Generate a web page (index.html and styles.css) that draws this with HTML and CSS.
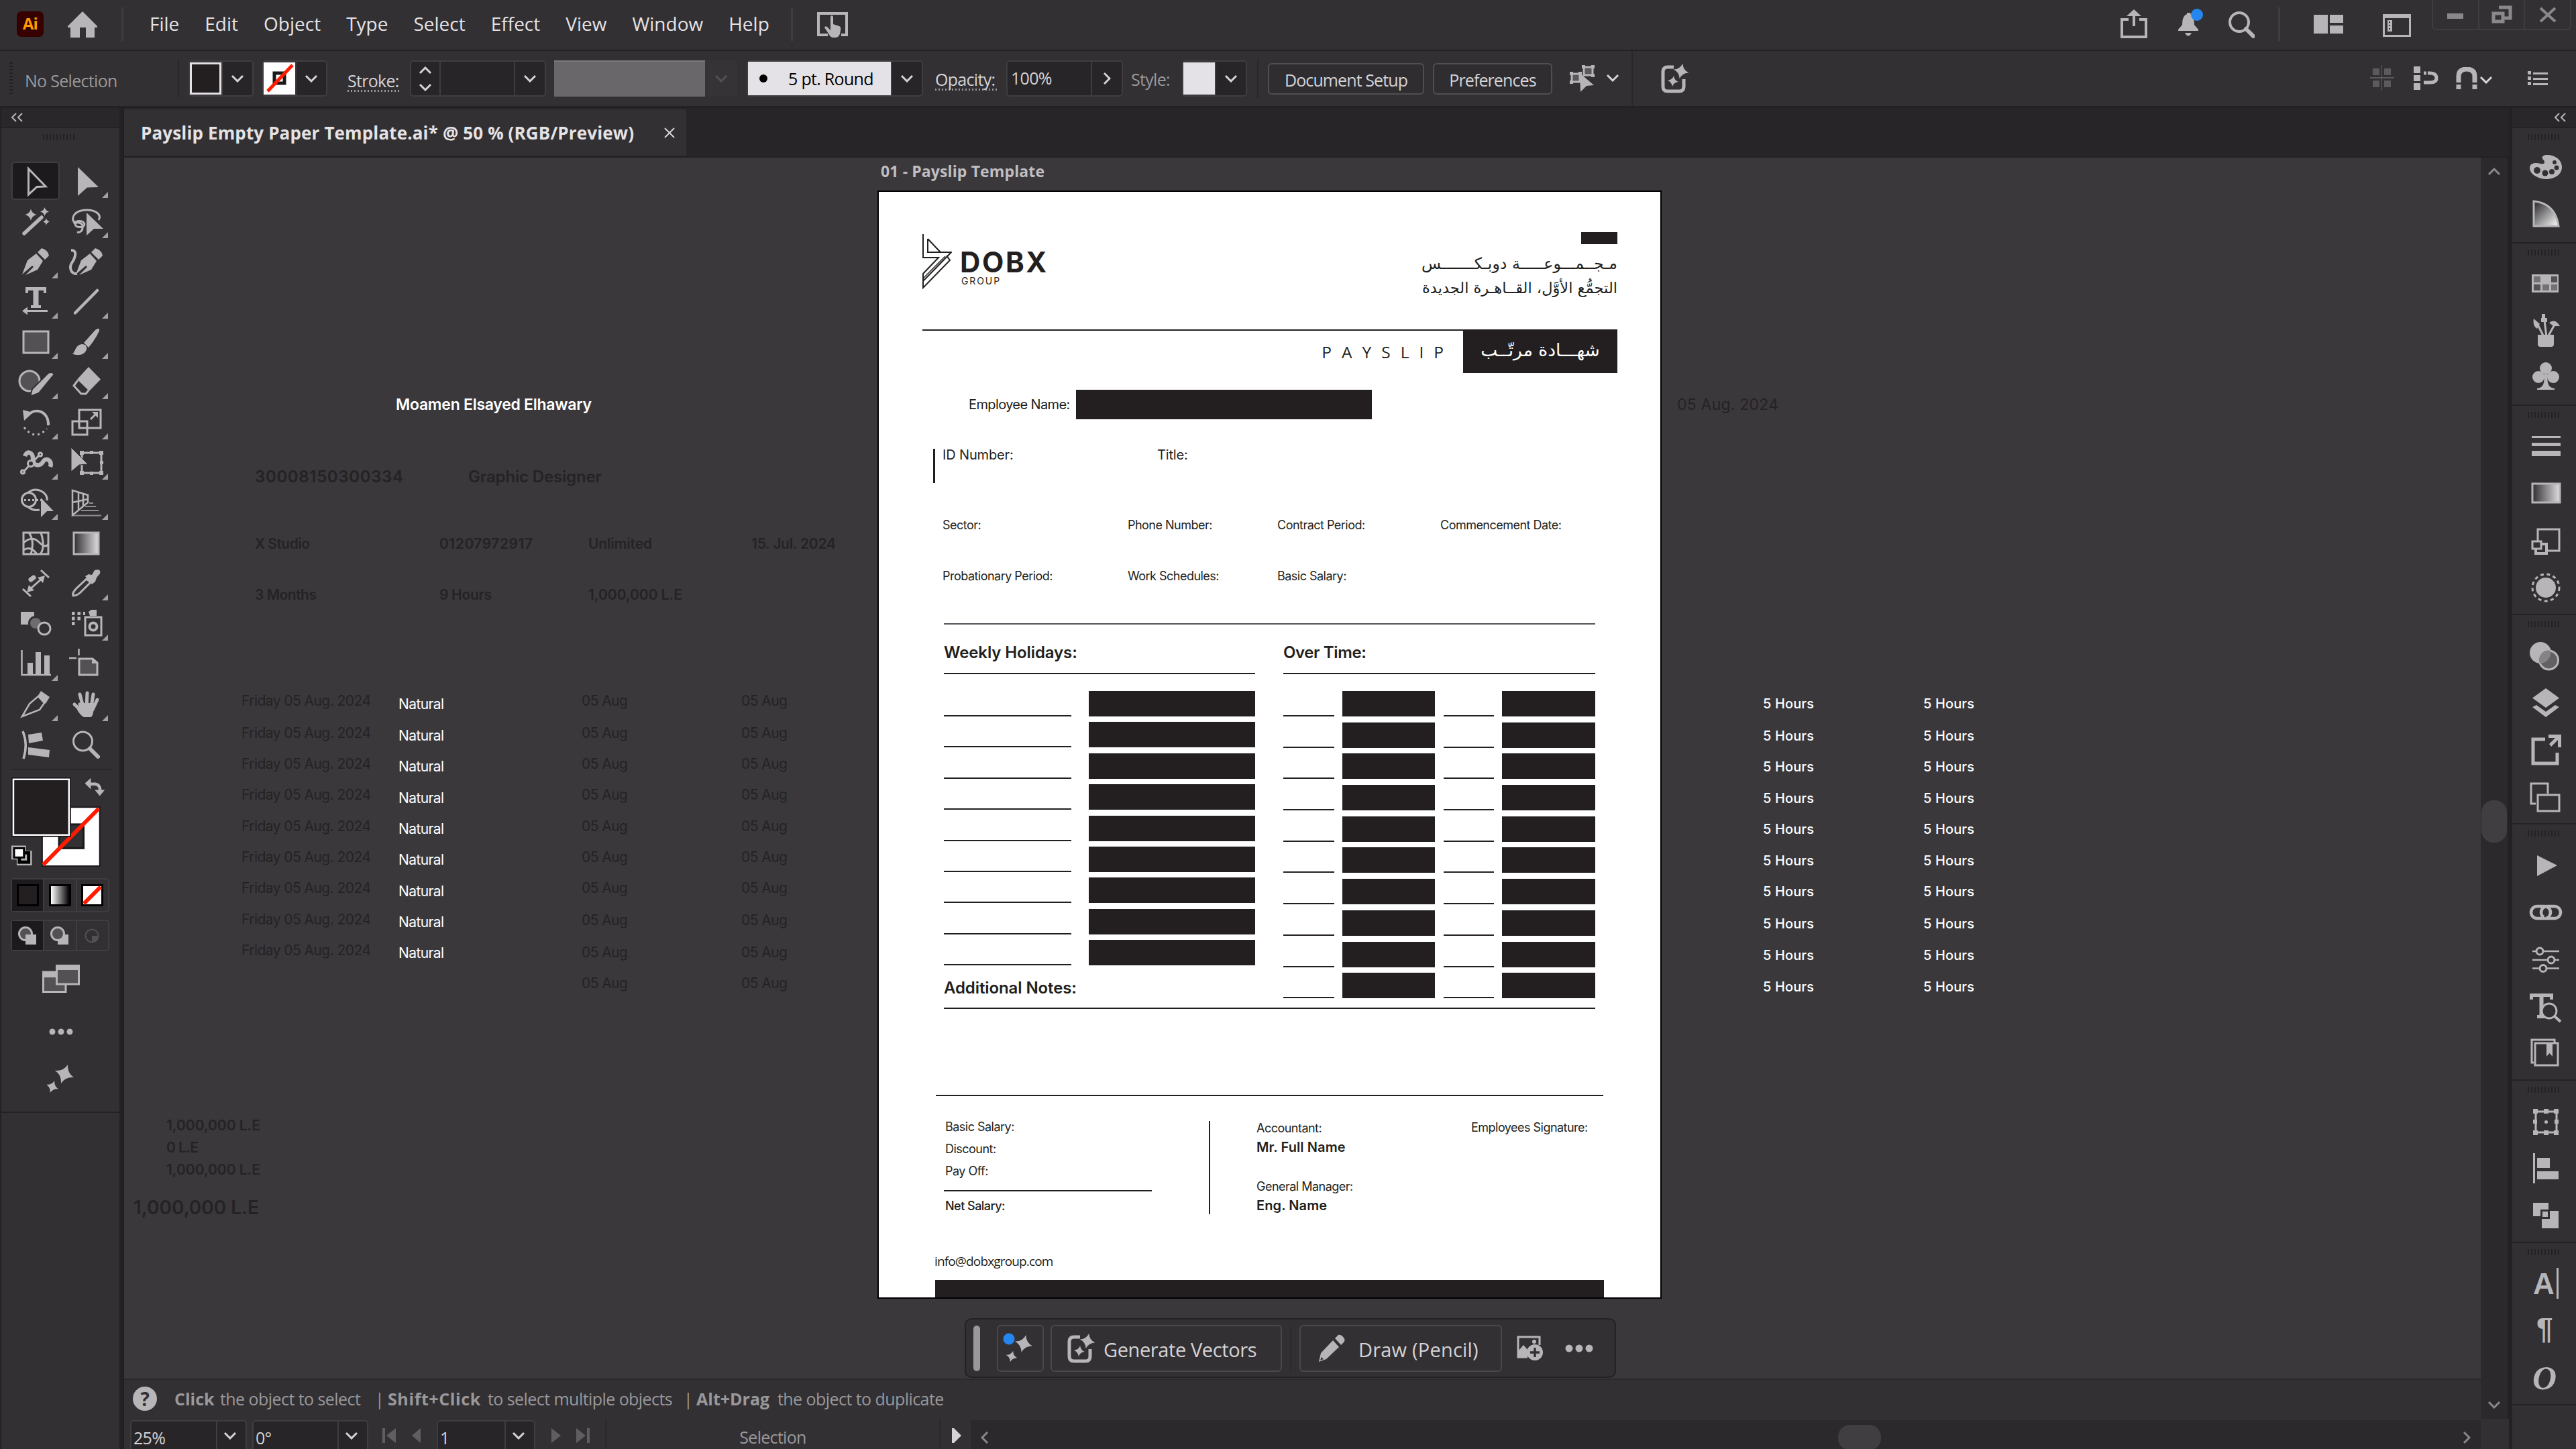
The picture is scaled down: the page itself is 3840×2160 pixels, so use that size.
FILE: index.html
```
<!DOCTYPE html>
<html lang="en">
<head>
    <meta charset="UTF-8">
    <meta name="viewport" content="width=device-width, initial-scale=1.0">
    <title>Payslip Empty Paper Template.ai</title>
    <link rel="stylesheet" href="styles.css">
</head>
<body>
    <svg width="0" height="0" class="defs">
        <defs>
            <symbol id="chev" viewBox="0 0 20 12"><path d="M2 2 L10 10 L18 2" fill="none" stroke="currentColor" stroke-width="3"/></symbol>
            <symbol id="chev2" viewBox="0 0 18 14"><path d="M8 1 L2 7 L8 13 M17 1 L11 7 L17 13" fill="none" stroke="currentColor" stroke-width="2"/></symbol>
            <path id="star" d="M0 -10 Q2 -2 10 0 Q2 2 0 10 Q-2 2 -10 0 Q-2 -2 0 -10Z"/>
            <path id="tri" d="M61 55 L70 46 V55Z" fill="#a3a1a4"/>
            <symbol id="generate" viewBox="0 0 42 46">
                <path d="M20 6 H11 Q4 6 4 13 V35 Q4 42 11 42 H28 Q35 42 35 35 V24" fill="none" stroke="#b7b5b8" stroke-width="5"/>
                <use href="#star" transform="translate(31 12) rotate(12) scale(1.15)"/>
                <use href="#star" transform="translate(19 27) rotate(8) scale(.8)"/>
            </symbol>
            <linearGradient id="g1"><stop offset="0" stop-color="#2f2d30"/><stop offset="1" stop-color="#e0dee1"/></linearGradient>
            <linearGradient id="g3" x1="0" y1="0" x2="1" y2="1"><stop offset="0" stop-color="#232124"/><stop offset="1" stop-color="#fff"/></linearGradient>
        </defs>
    </svg>

    <!-- Menu bar -->
    <header class="menubar">
        <div class="ai-logo">Ai</div>
        <svg class="home" viewBox="0 0 44 40"><path d="M22 0 L44 22 V24 H40 V39 H27 V24 H18 V39 H4 V24 H0 V22Z"/></svg>
        <span class="sep"></span>
        <nav class="menu">
            <span>File</span><span>Edit</span><span>Object</span><span>Type</span><span>Select</span><span>Effect</span><span>View</span><span>Window</span><span>Help</span>
        </nav>
        <span class="sep sep-help"></span>
        <svg class="touch" viewBox="0 0 46 40"><path d="M16 34 H2 V2 H44 V34 H36" fill="none" stroke="#b7b5b8" stroke-width="4"/><path d="M20 7 Q22 3 24 7 V18 L33 21 Q36 22 35 27 Q34 38 28 38 H24 Q20 38 17 32 L11 23 Q12 20 15 22 L20 27Z"/></svg>
        <div class="menubar-right">
            <svg class="ic-share" viewBox="0 0 40 44"><path d="M12 15 H2 V41 H38 V15 H28" fill="none" stroke="#b7b5b8" stroke-width="4"/><path d="M20 0 L31 10 H22 V25 H18 V10 H9Z"/></svg>
            <svg class="ic-bell" viewBox="0 0 40 44"><path d="M14 6 H18 Q25 10 25 24 L31 31 V33 H1 V31 L7 24 Q7 10 14 8Z"/><path d="M11 36 H21 Q16 45 11 36Z"/><circle cx="29" cy="9" r="9" fill="#2586f0"/></svg>
            <svg class="ic-search" viewBox="0 0 40 42"><circle cx="17" cy="18" r="14" fill="none" stroke="#b7b5b8" stroke-width="4"/><path d="M27 28 L38 39" stroke="#b7b5b8" stroke-width="6" stroke-linecap="round"/></svg>
            <span class="sep"></span>
            <svg class="ic-layout" viewBox="0 0 44 28"><path d="M0 0H21V28H0Z M24 0H44V12H24Z M24 16H44V28H24Z"/></svg>
            <svg class="ic-panel" viewBox="0 0 42 34"><path d="M0 0H42V34H0Z M3 6V31H39V6Z" fill-rule="evenodd"/><path d="M7 9H14V26H7Z M9 11V13H11V11Z M9 16V18H11V16Z M9 21V23H11V21Z" fill-rule="evenodd"/></svg>
            <div class="winctl">
                <span><svg viewBox="0 0 32 28"><path d="M4 12H28V20H4Z"/></svg></span>
                <span><svg viewBox="0 0 32 28"><path d="M12 3H29V19H20" fill="none" stroke="#8a888b" stroke-width="5"/><path d="M4 12H18V24H4Z" fill="none" stroke="#8a888b" stroke-width="5"/></svg></span>
                <span><svg viewBox="0 0 32 28"><path d="M5 4L27 24M27 4L5 24" stroke="#8a888b" stroke-width="4"/></svg></span>
            </div>
        </div>
    </header>

    <!-- Control bar -->
    <div class="controlbar">
        <span class="grip-v"></span>
        <span class="label dim no-sel">No Selection</span>
        <span class="vline"></span>
        <div class="box swatch-box"><i class="sw sw-fill"></i><b><svg class="chev"><use href="#chev"/></svg></b></div>
        <div class="box swatch-box stroke-box"><svg class="sw-none" viewBox="0 0 47 48"><rect width="47" height="48" fill="#fff"/><rect x="16" y="16" width="15" height="15" fill="#fff" stroke="#1a181b" stroke-width="5"/><path d="M6 43 L43 4" stroke="#fe1b00" stroke-width="5"/></svg><b><svg class="chev"><use href="#chev"/></svg></b></div>
        <span class="label dotted stroke-label">Stroke:</span>
        <div class="box stepper">
            <div class="updown"><svg class="chev up"><use href="#chev"/></svg><svg class="chev"><use href="#chev"/></svg></div>
            <div class="field"></div>
            <b><svg class="chev"><use href="#chev"/></svg></b>
        </div>
        <div class="profile"></div>
        <div class="profile-drop"><svg class="chev"><use href="#chev"/></svg></div>
        <div class="box brush"><span class="brush-name"><i></i>5 pt. Round</span><b><svg class="chev"><use href="#chev"/></svg></b></div>
        <span class="label dotted opacity-label">Opacity:</span>
        <div class="box opacity"><span class="field">100%</span><b><svg class="chev right"><use href="#chev"/></svg></b></div>
        <span class="label dim style-label">Style:</span>
        <div class="box swatch-box style-box"><i class="sw sw-style"></i><b><svg class="chev"><use href="#chev"/></svg></b></div>
        <span class="vline vline-btn"></span>
        <button class="btn doc-btn">Document Setup</button>
        <button class="btn pref-btn">Preferences</button>
        <svg class="ic-similar" viewBox="0 0 40 42"><g fill="#5a585b" stroke="#b7b5b8"><rect x="22" y="4" width="13" height="12"/><rect x="4" y="14" width="12" height="12"/></g><path d="M19 1h5v5h-5z M33 1h5v5h-5z M33 14h5v5h-5z M1 11h5v5h-5z M14 11h5v5h-5z M1 24h5v5h-5z"/><path d="M16 13 L37 31 L26 32 L17 41Z"/></svg>
        <svg class="chev chev-similar"><use href="#chev"/></svg>
        <span class="vline vline-full"></span>
        <svg class="ic-gen"><use href="#generate"/></svg>
        <div class="control-right">
            <svg class="ic-snapgrid" viewBox="0 0 36 38"><path d="M4 5H14V15H4Z M21 5H31V15H21Z M4 23H14V33H4Z M21 23H31V33H21Z M17 0H18V38H17Z M0 18H36V20H0Z" fill="#5c5a5d"/></svg>
            <svg class="ic-snappoint" viewBox="0 0 38 36"><path d="M0 0H10V10H0Z M0 13H10V22H0Z M0 25H10V35H0Z"/><path d="M15 10 H24 Q34 10 34 17.5 Q34 24 24 24 H15" fill="none" stroke="#b7b5b8" stroke-width="5" stroke-dasharray="4 2 60"/></svg>
            <svg class="ic-magnet" viewBox="0 0 32 34"><path d="M4 33V14Q4 3 16 3Q28 3 28 14V33" fill="none" stroke="#b7b5b8" stroke-width="7"/><path d="M0 23H32V26H0Z" fill="#323033"/></svg>
            <svg class="chev chev-small"><use href="#chev"/></svg>
            <svg class="ic-list" viewBox="0 0 30 22"><path d="M0 0H5V5H0Z M8 2H30V5H8Z M0 8H5V13H0Z M8 10H30V13H8Z M0 16H5V21H0Z M8 18H30V21H8Z"/></svg>
        </div>
    </div>

    <div class="main">
        <!-- Toolbar -->
        <aside class="tools">
            <div class="collapse"><svg><use href="#chev2"/></svg></div>
            <div class="tools-panel">
                <div class="grip"></div>
                <div class="tool-grid">
                    <svg viewBox="0 0 75 60"><rect x="2" y="2" width="70" height="55" rx="4" fill="#1c1a1d" stroke="#3f3d40" stroke-width="2"/><path d="M26.5 11.5 L52 38 L39 38.500 L26.5 50Z" class="ln"/></svg>
                    <svg viewBox="0 0 75 60"><path d="M25 9 L56 39 L39 39.5 L25 52Z"/><use href="#tri"/></svg>
                    <svg viewBox="0 0 75 60"><path d="M20 48 L46 24" class="ln" stroke-width="5.5" stroke-linecap="round"/><use href="#star" transform="translate(30 20) scale(.85)"/><use href="#star" transform="translate(50.5 15.5) scale(.65)"/><use href="#star" transform="translate(53 30.5) scale(.5)"/></svg>
                    <svg viewBox="0 0 75 60"><path d="M21 33 C12 24 22 13 38 13 C52 13 61 20 56 28 M20 34 c0 -6 14 -6 15 0 c0 6 -14 6 -14 0 c2 -4 12 -2 11 4 c1 6 -4 9 -8 8" class="ln"/><path d="M38 17 L63 41 L49 41 L38 51Z"/><use href="#tri"/></svg>
                    <svg viewBox="0 0 75 60"><path id="nib" d="M17 49 L25 28 L38 18 L48 29 L40 42 L22 50 L34 38 L32 36Z M40 16 L46 10 Q56 13 57 21 L51 27Z"/><use href="#tri"/></svg>
                    <svg viewBox="0 0 75 60"><use href="#nib" x="5"/><path d="M15 13 C26 13 20 26 16 32 S14 49 24 48" class="ln" stroke-width="4"/></svg>
                    <svg viewBox="0 0 75 60"><path d="M22 8 H53 V17 H49 V13 H41.5 V35 H45 V39 H30 V35 H33.5 V13 H26 V17 H22Z M17 43.5 L25 37.5 V42 H55 V45 H25 V49.5Z"/><use href="#tri"/></svg>
                    <svg viewBox="0 0 75 60"><path d="M21 46.5 L54 13" class="ln" stroke-width="4.5" stroke-linecap="round"/><use href="#tri"/></svg>
                    <svg viewBox="0 0 75 60"><rect x="19" y="14" width="37" height="32" class="ln" fill="#535154"/><use href="#tri"/></svg>
                    <svg viewBox="0 0 75 60"><path d="M17 47 C22 45 20 35 31 33 C37 33 39 37 38 41 C35 50 23 51 17 47Z M34 31 L51 12 Q58 7 57 13 Q52 25 41 38Z"/><use href="#tri"/></svg>
                    <svg viewBox="0 0 75 60"><circle cx="28" cy="28" r="15" class="ln" fill="#535154"/><path d="M29 51 L32 40 L56 16 Q62 13 65 18 L42 46Z" stroke="#323033" stroke-width="2"/><use href="#tri"/></svg>
                    <svg viewBox="0 0 75 60"><path d="M41 7 L59 25.5 L42 43 L24 25.5Z"/><path d="M25 27 L19 35 L30 47 H37 L41 42" class="ln"/><use href="#tri"/></svg>
                    <svg viewBox="0 0 75 60"><path d="M25 19 C40 5 57 16 56 34" class="ln" stroke-width="4"/><path d="M18 11 L33 15 L20 27Z"/><path d="M20 37 Q36 58 54 39" class="ln" stroke-dasharray="3 5"/><use href="#tri"/></svg>
                    <svg viewBox="0 0 75 60"><path d="M27 11 H59 V38 H27Z M17 28 H39 V48 H17Z M44 25 L52 17" class="ln"/><path d="M46 14 H55 V23Z"/><use href="#tri"/></svg>
                    <svg viewBox="0 0 75 60"><path d="M21 20 C24 11 33 14 33 23 C33 36 44 36 49 27 C53 22 62 26 59 36" class="ln" stroke-width="6.5"/><path d="M20 42 L42 19" class="ln"/><circle cx="18" cy="43.5" r="2.5" class="ln"/><circle cx="44" cy="17.5" r="2.5" class="ln"/><circle cx="30" cy="31" r="4.5" class="ln" fill="#323033"/><use href="#tri"/></svg>
                    <svg viewBox="0 0 75 60"><path d="M31 15 H60 V45 H31Z" class="ln"/><path d="M28 12h6v6h-6z M43 12h5v5h-5z M57 12h6v6h-6z M28 42h6v6h-6z M43 43h5v5h-5z M57 42h6v6h-6z M58 27h5v5h-5z"/><path d="M15 7 L40 32 L27 33 L15 43Z" stroke="#323033" stroke-width="1"/><use href="#tri"/></svg>
                    <svg viewBox="0 0 75 60"><circle cx="27" cy="25" r="10.5" class="ln"/><path d="M25 15 C38 4 56 14 54 26 M25 35 Q33 42 43 40" class="ln"/><path d="M20 25.5 H46" class="ln" stroke-dasharray="3 3"/><path d="M45 22 L64 42 L54 42 L45 51Z"/><use href="#tri"/></svg>
                    <svg viewBox="0 0 75 60"><path d="M17 11 L40 18 V29 L17 48Z M26 14 V40 M33 16 V35 M17 29 L40 24" class="ln" stroke-width="2.5"/><path d="M42 30 H48 M36 35 H52 M30 41 H56 M18 48.5 H60" class="ln" stroke-width="2" opacity=".7"/><use href="#tri"/></svg>
                    <svg viewBox="0 0 75 60"><path d="M19 14 H56 V46 H19Z M27 14 Q36 26 30 46 M45 14 Q52 36 44 46 M19 29 Q32 18 42 28 T56 31 M19 40 Q30 33 39 46" class="ln"/></svg>
                    <svg viewBox="0 0 75 60"><rect x="19" y="14" width="37" height="32" class="ln" fill="url(#g1)"/></svg>
                    <svg viewBox="0 0 75 60"><path d="M18 38 L30 49 M45 10 L57 21 M29 38 L47 22" class="ln"/><path d="M24 43 L27 32 L35 40Z M51 18 L48 29 L40 21Z"/><path d="M30 24 L34 21" class="ln" stroke-width="7" stroke-linecap="round"/></svg>
                    <svg viewBox="0 0 75 60"><path d="M18 48 C16 43 21 40 23 37 L38 23 L44 28 L29 43 Q24 48 18 48Z" class="ln"/><path d="M36 19 L41 16 L46 17 L50 10 Q60 7 58 15 L53 21 L51 27 L46 31Z"/><use href="#tri"/></svg>
                    <svg viewBox="0 0 75 60"><path d="M15 12 H35 V31 H15Z"/><circle cx="37" cy="29" r="9.5" fill="#6e6c6f" stroke="#323033"/><circle cx="50" cy="37" r="9" class="ln" fill="#323033"/></svg>
                    <svg viewBox="0 0 75 60"><path d="M36 20 H60 V47 H36Z" class="ln"/><circle cx="48" cy="34" r="5.5" class="ln" stroke-width="4"/><path d="M41 12 L45 9 H53 V18 H43Z"/><path d="M16 14.5 H36 M16 22 H29 M16 29.5 H21" class="ln" stroke-width="5" stroke-dasharray="4.5 4"/><use href="#tri"/></svg>
                    <svg viewBox="0 0 75 60"><path d="M16.5 9 V46 H60" class="ln" stroke-width="2.5"/><path d="M25 28h8v18h-8z M37 12h8v34h-8z M50 17h8v29h-8z"/><use href="#tri"/></svg>
                    <svg viewBox="0 0 75 60"><path d="M27 22 H47 L54 28 V46 H27Z" class="ln" fill="#535154"/><path d="M46 21 V29 H55Z"/><path d="M12 21 H23 M26.5 7 V17" class="ln" stroke-width="2.5"/></svg>
                    <svg viewBox="0 0 75 60"><path d="M17 48 L28 29 L41 18 L50 28 L43 38Z" class="ln" stroke-width="2.5"/><path d="M40 18 L45 10 L58 19 L52 29Z"/><use href="#tri"/></svg>
                    <svg viewBox="0 0 75 60"><path d="M28 30 L39 40 M39 13 L38 36 M28 15 L33 34 M48 15 L45 34 M54 23 L47 38 M20 30 L32 41" class="ln" stroke-width="5" stroke-linecap="round"/><path d="M30 28 H49 Q49 48 44 49 H34 Q28 46 23 36Z"/><use href="#tri"/></svg>
                    <svg viewBox="0 0 75 60"><path d="M18 10 Q26 30 19 51" class="ln" stroke-width="3.5"/><path d="M26 15 L46 12 L48 24 L27 28Z M26 34 L58 38 L57 49 L26 45Z"/></svg>
                    <svg viewBox="0 0 75 60"><circle cx="32.5" cy="25" r="14" class="ln"/><path d="M43 36 L55 48" class="ln" stroke-width="6" stroke-linecap="round"/></svg>
                </div>
                <svg class="colors" viewBox="0 0 150 150">
                    <rect x="46.5" y="56" width="87" height="89" fill="#fff" stroke="#1a181b" stroke-width="2"/>
                    <rect x="72" y="82" width="37" height="36" fill="#323033" stroke="#1a181b"/>
                    <path d="M48 143 L132 58" stroke="#fe1b00" stroke-width="6"/>
                    <rect x="0" y="11" width="90" height="90" fill="#1a181b"/><rect x="3" y="14" width="84" height="84" fill="#231f20" stroke="#fff" stroke-width="2.5"/>
                    <path d="M119 21 H127 Q134 22 134 31" class="ln" stroke-width="4.5"/><path d="M111 20 L120 12 V29Z M126 30 H141 L133.5 39Z"/>
                    <path d="M0 114 H22 V122 H31 V144 H8 V135 H0Z"/><rect x="12" y="125" width="14" height="14" fill="none" stroke="#000" stroke-width="5"/><rect x="4" y="118" width="15" height="14" fill="#fff" stroke="#000"/>
                </svg>
                <div class="modes color-modes">
                    <span class="on"><i class="m-color"></i></span>
                    <span><i class="m-grad"></i></span>
                    <span><svg viewBox="0 0 33 33"><rect width="33" height="33" fill="#000"/><path d="M3 3H30V30H3Z" fill="#fff"/><path d="M4 29 L29 4" stroke="#fe1b00" stroke-width="6"/></svg></span>
                </div>
                <div class="modes draw-modes">
                    <span class="on"><svg viewBox="0 0 28 28"><circle cx="11" cy="11" r="9.5" class="ln" fill="#535154"/><path d="M11 12H27V27H11Z"/></svg></span>
                    <span><svg viewBox="0 0 28 28"><path d="M11 12H27V27H11Z"/><circle cx="11" cy="11" r="9.5" class="ln" fill="#535154"/></svg></span>
                    <span><svg viewBox="0 0 28 28"><circle cx="13" cy="14" r="9.5" fill="none" stroke="#535154" stroke-width="2"/><path d="M13 14H22V20L18 23H13Z" fill="#535154"/></svg></span>
                </div>
                <svg class="screen-mode" viewBox="0 0 56 42"><path d="M1.5 11H35V40.5H1.5Z" class="ln" fill="#535154"/><path d="M1 10H20V19H1Z"/><path d="M21.5 1.5H54.5V29H21.5Z" class="ln" fill="#535154"/><path d="M21 0H55V8H21Z"/></svg>
                <svg class="more" viewBox="0 0 36 10"><circle cx="5" cy="5" r="4.5"/><circle cx="18" cy="5" r="4.5"/><circle cx="31" cy="5" r="4.5"/></svg>
                <svg class="spark" viewBox="0 0 40 44"><use href="#star" transform="translate(26 15) rotate(20) scale(1.5)"/><use href="#star" transform="translate(8 34) rotate(20) scale(.95)"/></svg>
            </div>
        </aside>

        <div class="workspace">
            <div class="tabs">
                <div class="tab"><span>Payslip Empty Paper Template.ai* @ 50 % (RGB/Preview)</span><svg viewBox="0 0 16 16"><path d="M1 1L15 15M15 1L1 15" stroke="#d5d3d6" stroke-width="2"/></svg></div>
            </div>

            <div class="canvas">
                <!-- loose objects on the pasteboard, coordinates in screen px -->
                <svg class="pasteboard" id="pasteboard" viewBox="185 235 3513 1820">
                    <text class="art-label" x="1313" y="264" textLength="244">01 - Payslip Template</text>
                    <text class="w b s23" x="590" y="611" textLength="292">Moamen Elsayed Elhawary</text>
                    <text class="d b s24" x="380" y="719" textLength="221">30008150300334</text>
                    <text class="d b s24" x="698" y="719" textLength="199">Graphic Designer</text>
                    <text class="d b s21" x="380" y="818" textLength="82">X Studio</text>
                    <text class="d b s21" x="655" y="818" textLength="139">01207972917</text>
                    <text class="d b s21" x="877" y="818" textLength="95">Unlimited</text>
                    <text class="d b s21" x="1120" y="818" textLength="126">15. Jul. 2024</text>
                    <text class="d b s21" x="380" y="894" textLength="92">3 Months</text>
                    <text class="d b s21" x="655" y="894" textLength="78">9 Hours</text>
                    <text class="d b s21" x="877" y="894" textLength="140">1,000,000 L.E</text>
                    <text class="d b s21" x="248" y="1685" textLength="140">1,000,000 L.E</text>
                    <text class="d b s21" x="248" y="1718" textLength="48">0 L.E</text>
                    <text class="d b s21" x="248" y="1751" textLength="140">1,000,000 L.E</text>
                    <text class="d b s28" x="199" y="1810" textLength="187">1,000,000 L.E</text>
                    <text class="d s23" x="2500" y="611" textLength="151">05 Aug. 2024</text>
                </svg>

                <!-- artboard -->
                <article class="doc">
                    <header class="doc-head">
                        <div class="logo">
                            <svg viewBox="0 0 44 82"><path d="M1 0 V35 H24 L1 59 V80 L41 39 L36 32 M8 7 V27 H43 L1 70 M8 7 L27 27" fill="none" stroke="#231f20" stroke-width="2"/><path d="M34 33 L1 66" stroke="#231f20" stroke-width="1.5"/></svg>
                            <div class="logo-text"><strong>DOBX</strong><span>GROUP</span></div>
                        </div>
                        <div class="company" dir="rtl" lang="ar">
                            <i></i>
                            <p>مـجــمـــوعـــــة دوبـكـــــــس</p>
                            <p class="addr">التجمُّع الأوَّل، القــاهـرة الجديدة</p>
                        </div>
                    </header>
                    <div class="doc-title">
                        <span class="latin">PAYSLIP</span>
                        <span class="arabic" dir="rtl" lang="ar">شهـــادة مرتّــب</span>
                    </div>
                    <div class="employee"><span>Employee Name:</span><i></i></div>
                    <div class="ids"><div><span class="t-id">ID Number:</span><span>Title:</span></div></div>
                    <div class="info">
                        <span>Sector:</span><span>Phone Number:</span><span>Contract Period:</span><span>Commencement Date:</span>
                        <span>Probationary Period:</span><span>Work Schedules:</span><span>Basic Salary:</span>
                    </div>
                    <div class="tables">
                        <section>
                            <h2>Weekly Holidays:</h2>
                            <div class="rows holidays" id="holidays"></div>
                            <h2 class="notes">Additional Notes:</h2>
                        </section>
                        <section>
                            <h2 class="over">Over Time:</h2>
                            <div class="rows overtime" id="overtime"></div>
                        </section>
                    </div>
                    <div class="notes-space"></div>
                    <footer class="doc-foot">
                        <div class="sums">
                            <p>Basic Salary:</p><p>Discount:</p><p>Pay Off:</p>
                            <p class="net">Net Salary:</p>
                        </div>
                        <div class="people">
                            <p class="role">Accountant:</p><p class="name">Mr. Full Name</p>
                            <p class="role gm">General Manager:</p><p class="name">Eng. Name</p>
                        </div>
                        <div class="sign">Employees Signature:</div>
                    </footer>
                    <div class="mail">info@dobxgroup.com</div>
                    <div class="bottom-bar"></div>
                </article>

                <!-- contextual task bar -->
                <div class="taskbar">
                    <span class="handle"></span>
                    <div class="tb-btn tb-spark"><svg viewBox="0 0 66 68"><use href="#star" transform="translate(38 27) rotate(15) scale(1.35)"/><use href="#star" transform="translate(20 46) rotate(15) scale(.85)"/><circle cx="16" cy="20" r="8.5" fill="#2586f0"/></svg></div>
                    <div class="tb-btn tb-gen"><svg><use href="#generate"/></svg><span>Generate Vectors</span></div>
                    <span class="tb-sep"></span>
                    <div class="tb-btn tb-draw"><svg viewBox="0 0 40 42"><path d="M30 1 Q34 0 38 5 Q41 9 38 12 L34 16 L25 6Z M22 9 L31 19 L12 37 L1 41 L4 28Z M5 34 L3 39 L8 37Z" fill-rule="evenodd"/></svg><span>Draw (Pencil)</span></div>
                    <svg class="tb-img" viewBox="0 0 40 38"><path d="M16 32 H2 V2 H34 V14" fill="none" stroke="#b7b5b8"/><path d="M3 31 V22 L10 14 L17 22 V31Z"/><circle cx="26" cy="9" r="3"/><circle cx="27" cy="25" r="12"/><path d="M27 18V32M20 25H34" stroke="#323033" stroke-width="3.5"/></svg>
                    <svg class="tb-more" viewBox="0 0 42 12"><circle cx="6" cy="6" r="5.5"/><circle cx="21" cy="6" r="5.5"/><circle cx="36" cy="6" r="5.5"/></svg>
                </div>
            </div>

            <div class="vscroll">
                <svg class="chev up"><use href="#chev"/></svg>
                <i></i>
                <svg class="chev"><use href="#chev"/></svg>
            </div>

            <div class="hints">
                <span class="help">?</span>
                <b class="h1">Click</b><span class="h2">the object to select</span><em>|</em>
                <b class="h3">Shift+Click</b><span class="h4">to select multiple objects</span><em>|</em>
                <b class="h5">Alt+Drag</b><span class="h6">the object to duplicate</span>
            </div>

            <div class="status">
                <div class="sbox s-zoom"><span>25%</span><b><svg class="chev"><use href="#chev"/></svg></b></div>
                <div class="sbox s-rot"><span>0°</span><b><svg class="chev"><use href="#chev"/></svg></b></div>
                <svg class="s-prev" viewBox="0 0 60 22"><path d="M0 0H4V22H0Z M20 0V22L6 11Z M57 0V22L44 11Z"/></svg>
                <div class="sbox s-page"><span>1</span><b><svg class="chev"><use href="#chev"/></svg></b></div>
                <svg class="s-next" viewBox="0 0 60 22"><path d="M0 0L14 11L0 22Z M37 0L51 11L37 22Z M53 0H57V22H53Z"/></svg>
                <span class="s-tool">Selection</span>
                <svg class="s-play" viewBox="0 0 14 22"><path d="M0 0H3L14 11L3 22H0Z"/></svg>
                <div class="hscroll">
                    <svg class="chev left"><use href="#chev"/></svg>
                    <i></i>
                    <svg class="chev right"><use href="#chev"/></svg>
                </div>
            </div>
        </div>

        <!-- Panel dock -->
        <aside class="dock">
            <div class="collapse"><svg><use href="#chev2"/></svg></div>
            <div class="group first">
                <div class="grip"></div>
                <svg viewBox="0 0 60 56"><path d="M30 10 C44 9 54 18 54 28 C54 40 42 46 31 46 C18 46 6 38 6 30 C6 22 14 21 22 23 C28 25 30 20 26 17 C23 13 25 11 30 10Z"/><g fill="#323033"><circle cx="17" cy="33" r="5"/><circle cx="29" cy="37" r="4.5"/><circle cx="39" cy="35" r="4"/><circle cx="46" cy="29" r="3.5"/><circle cx="43" cy="21" r="3"/></g></svg>
                <svg viewBox="0 0 60 56"><path d="M12 9 Q44 12 49 46 H12Z" fill="url(#g3)" stroke="#b7b5b8"/></svg>
            </div>
            <div class="group">
                <div class="grip"></div>
                <svg viewBox="0 0 60 56"><path d="M9 13H49V40H9Z"/><path d="M12 16H22V25H12Z M25 28H35V37H25Z M38 28H47V37H38Z" fill="#737174"/><path d="M38 16H47V25H38Z M12 28H22V37H12Z" fill="#535154"/></svg>
                <svg viewBox="0 0 60 56"><path d="M18 33H42V47Q42 51 38 51H22Q18 51 18 47Z M24 2H29V8H32V14H23V8H24Z M12 9L21 17L17 24Q10 20 12 9Z M35 15Q44 8 51 20L41 20Z"/><path d="M18 18L27 36M28 12L31 36M43 18L33 36" stroke="#b7b5b8"/></svg>
                <svg viewBox="0 0 60 56"><circle cx="30" cy="13" r="9"/><circle cx="19" cy="26" r="9"/><circle cx="41" cy="26" r="9"/><path d="M27 22H33Q30 42 43 43V45H17V43Q30 42 27 22Z"/></svg>
            </div>
            <div class="group">
                <div class="grip"></div>
                <svg viewBox="0 0 60 56"><path d="M9 12H52V15H9Z M9 22H52V27H9Z M9 34H52V42H9Z"/></svg>
                <svg viewBox="0 0 60 56"><rect x="10" y="13" width="41" height="28" fill="url(#g1)" stroke="#b7b5b8"/></svg>
                <svg viewBox="0 0 60 56"><path d="M18 28V11H50V43H32" class="ln"/><path d="M15 33H31V47H15Z" class="ln" stroke-width="4"/><path d="M10 29H23V40H10Z" class="ln" fill="#323033"/></svg>
                <svg viewBox="0 0 60 56"><circle cx="30" cy="28" r="15"/><circle cx="30" cy="28" r="20" class="ln" stroke-dasharray="5 4.5"/></svg>
            </div>
            <div class="group">
                <div class="grip"></div>
                <svg viewBox="0 0 60 56"><circle cx="22" cy="23" r="16"/><circle cx="34.5" cy="34" r="14" fill="#626063" stroke="#b7b5b8"/><path d="M37 20 A16 16 0 0 1 21 39 A14 14 0 0 1 37 20Z" fill="#858386"/></svg>
                <svg viewBox="0 0 60 56"><path d="M30 6L50 20.5L30 35L10 20.5Z M10 34L16 31L30 41L44 31L50 34L30 49Z"/></svg>
                <svg viewBox="0 0 60 56"><path d="M29 12H11V48H47V32" class="ln" stroke-width="5"/><path d="M34 5H53V24H48V13L38 23L35 19L44 10H34Z"/></svg>
                <svg viewBox="0 0 60 56"><path d="M15 38H8V8H33V23" class="ln"/><path d="M18 25H50V49H18Z" class="ln"/></svg>
            </div>
            <div class="group">
                <div class="grip"></div>
                <svg viewBox="0 0 60 56"><path d="M17 13L47 28L17 44Z"/></svg>
                <svg viewBox="0 0 60 56"><rect x="8" y="19" width="29" height="18" rx="9" class="ln" stroke-width="4.5"/><rect x="23" y="19" width="29" height="18" rx="9" class="ln" stroke-width="4.5"/><path d="M31 24V32M28 35L33 32" stroke="#323033" stroke-width="2"/></svg>
                <svg viewBox="0 0 60 56"><path d="M10 16H50M10 29H50M10 41.5H50" class="ln" stroke-width="2.5"/><g class="ln" fill="#323033"><circle cx="21" cy="16" r="5"/><circle cx="38" cy="29" r="5"/><circle cx="26" cy="41.5" r="5"/></g></svg>
                <svg viewBox="0 0 60 56"><path d="M6 9H41V18H36V14H26.5V41H29V46H17V41H20.5V14H11V18H6Z"/><circle cx="35" cy="35" r="11" fill="#323033" stroke="#b7b5b8"/><path d="M43 43L52 51" class="ln" stroke-width="4"/></svg>
                <svg viewBox="0 0 60 56"><path d="M14 13H48V46H14Z M12 42H9V8H43V12" class="ln"/><path d="M31 13H40V33L35.5 28L31 33Z"/></svg>
            </div>
            <div class="group">
                <div class="grip"></div>
                <svg viewBox="0 0 60 56"><path d="M15 13H46V44H15Z" class="ln"/><path d="M11 9h7v7h-7z M27 9h7v7h-7z M42 9h7v7h-7z M11 25h6v6h-6z M43 25h6v6h-6z M11 41h7v7h-7z M27 41h7v7h-7z M42 41h7v7h-7z"/><circle cx="30.5" cy="28.5" r="2.5"/></svg>
                <svg viewBox="0 0 60 56"><path d="M11 5H14V50H11Z M17 12H36V27H17Z M17 32H49V44H17Z"/></svg>
                <svg viewBox="0 0 60 56"><path d="M11 9H34V19H22V29H11Z M49 21V47H24V33H36V21Z M25 22H33V30H25Z"/></svg>
            </div>
            <div class="group">
                <div class="grip"></div>
                <svg viewBox="0 0 60 56"><text x="11" y="43" class="g-sans">A</text><path d="M46 4H49V50H46Z"/></svg>
                <svg viewBox="0 0 60 56"><text x="16" y="40" class="g-sans">¶</text></svg>
                <svg viewBox="0 0 60 56"><text x="10" y="45" class="g-serif">O</text></svg>
            </div>
            <div class="dock-rest"></div>
        </aside>
    </div>

    <script>
        const board = document.getElementById('pasteboard');

        // put one copy of the text at each baseline
        function column(text, x, width, cls, baselines) {
            baselines.forEach(y => {
                const t = document.createElementNS('http://www.w3.org/2000/svg', 'text');
                t.setAttribute('x', x);
                t.setAttribute('y', y);
                t.setAttribute('textLength', width);
                t.setAttribute('class', cls);
                t.textContent = text;
                board.appendChild(t);
            });
        }

        const aug = [1052, 1100, 1146, 1192, 1239, 1285, 1331, 1379, 1427, 1473];
        const hours = [1056, 1104, 1150, 1197, 1243, 1290, 1336, 1384, 1431, 1478];
        column('Friday 05 Aug. 2024', 360, 193, 'd s21', [1052, 1100, 1146, 1192, 1239, 1285, 1331, 1378, 1424]);
        column('Natural', 594, 68, 'w s21', [1057, 1104, 1150, 1197, 1243, 1289, 1336, 1382, 1428]);
        column('05 Aug', 867, 69, 'd s21', aug);
        column('05 Aug', 1105, 69, 'd s21', aug);
        column('5 Hours', 2628, 76, 'w m s20', hours);
        column('5 Hours', 2867, 76, 'w m s20', hours);

        document.getElementById('holidays').innerHTML = '<i></i><b></b>'.repeat(9);
        document.getElementById('overtime').innerHTML = '<i></i><b></b><i></i><b></b>'.repeat(10);
    </script>
</body>
</html>
```

FILE: styles.css
```
* {
    box-sizing: border-box;
}
body {
    margin: 0;
    width: 3840px;
    height: 2160px;
    overflow: hidden;
    display: flex;
    flex-direction: column;
    background: #232124;
    color: #d5d3d6;
    font-family: "Open Sans", "Noto Sans", sans-serif;
    font-size: 25px;
    letter-spacing: -0.7px;
}
svg {
    display: block;
    flex: none;
    fill: #b7b5b8;
    stroke-width: 3;
}
p, h2 {
    margin: 0;
}
.defs {
    position: absolute;
}
.ln {
    stroke: #b7b5b8;
}
.ln:not([fill]) {
    fill: none;
}
.chev {
    width: 20px;
    height: 12px;
    color: #d5d3d6;
}
.chev.up { transform: rotate(180deg); }
.chev.right { transform: rotate(-90deg); }
.chev.left { transform: rotate(90deg); }

/* menu bar */
.menubar {
    height: 76px;
    border-bottom: 2px solid #232124;
    background: #323033;
    display: flex;
    align-items: center;
    padding: 0 0 2px 25px;
    flex: none;
}
.ai-logo {
    width: 40px;
    height: 38px;
    border-radius: 7px;
    background: #360000;
    color: #ff9a00;
    font-weight: bold;
    font-size: 24px;
    line-height: 36px;
    text-align: center;
}
.home {
    width: 44px;
    height: 40px;
    margin: 2px 0 0 36px;
}
.sep {
    width: 3px;
    height: 50px;
    background: #3f3d40;
    margin-left: 36px;
}
.menu {
    display: flex;
    gap: 38px;
    margin-left: 39px;
    padding-bottom: 2px;
    font-size: 28px;
    letter-spacing: 0;
    width: 928px;
    color: #e4e2e5;
}
.sep-help {
    margin-left: 28px;
}
.touch {
    width: 46px;
    height: 40px;
    margin: 3px 0 0 36px;
}
.menubar-right {
    margin-left: auto;
    display: flex;
    align-items: center;
    height: 74px;
}
.ic-share { width: 40px; height: 44px; }
.ic-bell { width: 40px; height: 44px; margin: -2px 0 0 45px; }
.ic-search { width: 40px; height: 42px; margin-left: 35px; }
.menubar-right .sep { margin-left: 35px; }
.ic-layout { width: 44px; height: 28px; margin-left: 50px; }
.ic-panel { width: 42px; height: 34px; margin: 3px 0 0 59px; }
.winctl {
    align-self: flex-start;
    display: flex;
    width: 208px;
    height: 47px;
    margin: -1px 7px 0 31px;
    border: 2px solid #3f3d40;
    border-radius: 0 0 6px 6px;
}
.winctl span {
    flex: 1;
    display: flex;
    justify-content: center;
    align-items: center;
}
.winctl span + span {
    border-left: 2px solid #3f3d40;
}
.winctl svg {
    width: 32px;
    height: 28px;
    fill: #8a888b;
}

/* control bar */
.controlbar {
    height: 85px;
    border-bottom: 3px solid #232124;
    background: #323033;
    display: flex;
    align-items: center;
    flex: none;
}
.controlbar > * {
    flex: none;
}
.grip-v {
    width: 5px;
    height: 48px;
    margin-left: 14px;
    background: repeating-linear-gradient(#232124 0 2px, transparent 2px 5px);
}
.label {
    padding-top: 5px;
    white-space: nowrap;
}
.dim {
    color: #9a989b;
}
.no-sel {
    margin-left: 18px;
    width: 228px;
}
.vline {
    width: 2px;
    height: 58px;
    background: #29272a;
}
.box {
    height: 54px;
    border: 2px solid #3f3d40;
    border-radius: 5px;
    background: #272528;
    display: flex;
    align-items: stretch;
}
.box > b {
    width: 46px;
    border-left: 2px solid #3f3d40;
    display: flex;
    align-items: center;
    justify-content: center;
}
.swatch-box {
    width: 97px;
    margin-left: 14px;
}
.stroke-box {
    margin-left: 13px;
}
.sw,
.sw-none {
    width: 47px;
    height: 48px;
    margin-top: 1px;
}
.sw-fill {
    background: #231f20;
    border: 3px solid #e4e2e6;
}
.sw-style {
    background: #e4e2e6;
}
.dotted {
    background: repeating-linear-gradient(90deg, #9a989b 0 2px, transparent 2px 5px) 0 100% / 100% 3px no-repeat;
}
.stroke-label {
    margin-left: 30px;
    width: 79px;
}
.stepper {
    margin-left: 14px;
    width: 203px;
}
.updown {
    width: 44px;
    display: flex;
    flex-direction: column;
    align-items: center;
    justify-content: space-around;
    border-right: 2px solid #3f3d40;
}
.field {
    flex: 1;
    line-height: 48px;
    padding-left: 5px;
}
.profile {
    width: 225px;
    height: 54px;
    margin-left: 12px;
    background: #69676a;
    border-top: 2px solid #7a787b;
}
.profile-drop {
    width: 48px;
    height: 54px;
    background: #353336;
    display: flex;
    align-items: center;
    justify-content: center;
}
.profile-drop .chev {
    color: #535154;
}
.brush {
    width: 263px;
    margin-left: 14px;
}
.brush-name {
    flex: 1;
    background: #e4e2e6;
    color: #000;
    line-height: 51px;
    display: flex;
    align-items: center;
    white-space: nowrap;
}
.brush-name i {
    width: 12px;
    height: 12px;
    border-radius: 50%;
    background: #000;
    margin: 0 31px 0 17px;
}
.opacity-label {
    margin: -4px 0 0 18px;
    width: 92px;
}
.opacity {
    width: 174px;
    margin-left: 14px;
}
.style-label {
    margin: -4px 0 0 12px;
    width: 62px;
}
.vline-btn {
    margin-left: 15px;
}
.btn {
    height: 47px;
    padding: 3px 0 0;
    border: 2px solid #504e51;
    border-radius: 6px;
    background: #2f2d30;
    color: #d5d3d6;
    font: inherit;
    letter-spacing: -0.9px;
}
.doc-btn {
    width: 233px;
    margin-left: 14px;
}
.pref-btn {
    width: 178px;
    margin-left: 13px;
}
.ic-similar {
    width: 40px;
    height: 42px;
    margin-left: 25px;
}
.chev-similar {
    margin: -3px 0 0 15px;
}
.vline-full {
    height: 82px;
    margin-left: 18px;
}
.ic-gen {
    width: 42px;
    height: 46px;
    margin-left: 41px;
}
.control-right {
    margin-left: auto;
    display: flex;
    align-items: center;
    padding-right: 42px;
}
.ic-snapgrid { width: 36px; height: 38px; margin-top: -2px; }
.ic-snappoint { width: 38px; height: 36px; margin-left: 29px; }
.ic-magnet { width: 32px; height: 34px; margin-left: 25px; }
.chev-small { margin: 4px 0 0 3px; }
.ic-list { width: 30px; height: 22px; margin-left: 52px; }

.main {
    flex: 1;
    display: flex;
    padding-bottom: 2px;
}

/* toolbar on the left */
.tools {
    width: 185px;
    padding-left: 2px;
    padding-right: 6px;
    display: flex;
    flex-direction: column;
    border-right: 1px solid #1c1a1d;
}
.collapse {
    height: 28px;
    margin-bottom: 2px;
    background: #29272a;
    display: flex;
    align-items: center;
    color: #b7b5b8;
}
.collapse svg {
    width: 18px;
    height: 14px;
}
.tools .collapse {
    padding-left: 14px;
}
.tools-panel {
    flex: 1;
    background: #323033;
    padding-left: 14px;
    display: flex;
    flex-direction: column;
}
.grip {
    width: 48px;
    height: 9px;
    background: repeating-linear-gradient(90deg, #232124 0 2px, transparent 2px 5px);
}
.tools .grip {
    margin: 9px 0 31px 48px;
}
.tool-grid {
    display: grid;
    grid-template-columns: 75px 75px;
    grid-auto-rows: 60px;
}
.tool-grid svg {
    width: 75px;
    height: 60px;
}
.colors {
    box-sizing: content-box;
    width: 150px;
    height: 148px;
    border-top: 2px solid #29272a;
    margin-top: 6px;
}
.modes {
    display: flex;
    width: 147px;
    border: 2px solid #3f3d40;
    border-radius: 5px;
}
.modes span {
    flex: 1;
    display: flex;
    align-items: center;
    justify-content: center;
}
.modes span + span {
    border-left: 2px solid #3f3d40;
}
.modes .on {
    background: #1c1a1d;
}
.color-modes {
    height: 51px;
    margin-top: 13px;
}
.color-modes i,
.color-modes svg {
    width: 33px;
    height: 33px;
}
.color-modes i {
    border: 3px solid #000;
}
.m-color {
    background: #231f20;
}
.m-grad {
    background: linear-gradient(90deg, #fff, #000);
}
.draw-modes {
    height: 47px;
    margin-top: 11px;
}
.draw-modes svg {
    width: 28px;
    height: 28px;
}
.screen-mode {
    width: 56px;
    height: 42px;
    margin: 20px 0 0 47px;
}
.more {
    width: 36px;
    height: 10px;
    margin: 53px 0 0 57px;
}
.spark {
    width: 40px;
    height: 44px;
    margin: 43px 0 0 54px;
}
.tools-panel::after {
    content: "";
    margin: 27px 0 0 -14px;
    border-top: 2px solid #232124;
}

/* document area */
.workspace {
    width: 3555px;
    display: grid;
    grid-template-columns: 3513px 42px;
    grid-template-rows: 74px 1820px 60px 1fr;
}
.tabs {
    grid-column: 1 / 3;
    background: #272528;
    border-bottom: 2px solid #232124;
    padding-top: 2px;
}
.tab {
    width: 838px;
    height: 69px;
    background: #323033;
    display: flex;
    align-items: center;
    justify-content: space-between;
    padding: 0 17px 0 25px;
    font-weight: bold;
    font-size: 26px;
    letter-spacing: 0.14px;
    color: #e4e2e5;
    white-space: nowrap;
}
.tab svg {
    width: 16px;
    height: 16px;
}
.canvas {
    position: relative;
    background: #3a383b;
    overflow: hidden;
}
.pasteboard {
    position: absolute;
    inset: 0;
    width: 3513px;
    height: 1820px;
    font-family: Inter, sans-serif;
    letter-spacing: 0;
}
.art-label {
    font-family: "Open Sans", sans-serif;
    font-size: 23px;
    font-weight: bold;
    fill: #c0bec1;
}
.w { fill: #fff; }
.d { fill: #252225; }
.b { font-weight: 600; }
.m { font-weight: 500; }
.s20 { font-size: 20px; }
.s21 { font-size: 21px; }
.s23 { font-size: 23px; }
.s24 { font-size: 24px; }
.s28 { font-size: 28px; }

/* payslip */
.doc {
    position: absolute;
    left: 1123px;
    top: 49px;
    width: 1169px;
    height: 1652px;
    border: 2px solid #000;
    background: #fff;
    color: #231f20;
    font-family: Inter, sans-serif;
    font-size: 18px;
    letter-spacing: -0.52px;
    display: grid;
    grid-template-columns: 100%;
    grid-template-rows: 205px 90px 88px 75px 185px 575px 130px 224px 50px 26px;
    white-space: nowrap;
}
.doc-head {
    display: flex;
    justify-content: space-between;
    padding: 60px 64px 0 65px;
}
.logo {
    display: flex;
    padding-top: 3px;
}
.logo svg {
    width: 44px;
    height: 82px;
}
.logo-text {
    display: flex;
    flex-direction: column;
    margin: 20px 0 0 12px;
}
.logo-text strong {
    font-size: 42px;
    font-weight: 700;
    line-height: 43px;
    letter-spacing: 2.6px;
}
.logo-text span {
    font-size: 14px;
    line-height: 14px;
    letter-spacing: 1.9px;
    padding-left: 2px;
}
.company {
    font-family: "DejaVu Sans", sans-serif;
    font-size: 23.7px;
    line-height: 36px;
    letter-spacing: 0;
}
.company i {
    display: block;
    width: 54px;
    height: 18px;
    background: #231f20;
    margin-bottom: 11px;
}
.addr {
    font-size: 22.5px;
}
.doc-title {
    display: flex;
    justify-content: flex-end;
    margin: 0 64px 0 65px;
    height: 65px;
    border-top: 2px solid #231f20;
}
.latin {
    font-family: "Open Sans", sans-serif;
    font-size: 24.5px;
    letter-spacing: 15px;
    line-height: 63px;
    margin-right: 14px;
}
.arabic {
    width: 230px;
    background: #231f20;
    color: #fff;
    font-family: "DejaVu Sans", sans-serif;
    font-size: 26.5px;
    letter-spacing: 0;
    line-height: 58px;
    text-align: center;
}
.employee {
    display: flex;
    padding-left: 134px;
    font-size: 20px;
    letter-spacing: -0.62px;
    line-height: 45px;
}
.employee span {
    width: 160px;
}
.employee i {
    width: 441px;
    height: 44px;
    background: #231f20;
}
.ids div {
    display: flex;
    height: 51px;
    margin-left: 81px;
    border-left: 3px solid #231f20;
    padding-left: 11px;
    font-size: 20px;
    letter-spacing: -0.15px;
    line-height: 18px;
}
.t-id {
    width: 320px;
}
.info {
    display: grid;
    grid-template-columns: 276px 223px 243px auto;
    grid-template-rows: 76px 76px;
    align-items: center;
    padding-left: 95px;
    align-content: start;
}
.tables {
    display: grid;
    grid-template-columns: 464px 465px;
    gap: 42px;
    margin: 0 97px;
    border-top: 2px solid #55535a;
    border-bottom: 2px solid #231f20;
}
.tables h2 {
    height: 74px;
    padding-top: 8px;
    border-bottom: 2px solid #231f20;
    font-size: 24px;
    font-weight: 600;
    line-height: 68px;
    letter-spacing: -0.1px;
}
.tables .over {
    letter-spacing: -0.4px;
}
.tables .notes {
    border: 0;
    padding: 0;
    line-height: 67px;
}
.rows {
    display: grid;
    grid-auto-rows: 38px;
    margin-top: 25px;
}
.holidays {
    grid-template-columns: 190px 248px;
    justify-content: space-between;
    row-gap: 8.4px;
}
.overtime {
    grid-template-columns: 76px 138px 75px 139px;
    justify-content: space-between;
    row-gap: 8.7px;
}
.rows i {
    border-bottom: 2px solid #231f20;
}
.rows b {
    background: #231f20;
}
.notes-space {
    margin: 0 85px;
    border-bottom: 2px solid #231f20;
}
.doc-foot {
    display: flex;
    padding: 37px 0 0 97px;
}
.sums {
    width: 397px;
    height: 139px;
    border-right: 2px solid #231f20;
}
.sums p {
    line-height: 33px;
    margin-top: -8px;
    padding-left: 2px;
    margin-bottom: 8px;
}
.sums .net {
    width: 310px;
    margin-top: 12px;
    border-top: 2px solid #231f20;
    font-weight: 500;
    line-height: 43px;
}
.people {
    width: 320px;
    margin-left: 69px;
}
.role {
    line-height: 22px;
}
.name {
    font-size: 20px;
    font-weight: 600;
    letter-spacing: 0.09px;
    line-height: 34px;
}
.gm {
    margin-top: 31px;
}
.sign {
    line-height: 19px;
}
.mail {
    padding-left: 83px;
    font-family: "Open Sans", sans-serif;
    font-size: 19px;
    letter-spacing: -0.85px;
    line-height: 45px;
}
.bottom-bar {
    margin: 0 84px;
    background: #231f20;
}

/* contextual task bar */
.taskbar {
    position: absolute;
    left: 1253px;
    top: 1730px;
    width: 971px;
    height: 89px;
    border: 2px solid #232124;
    border-radius: 10px;
    background: #323033;
    display: flex;
    align-items: center;
    font-size: 29px;
    white-space: nowrap;
}
.handle {
    width: 10px;
    height: 68px;
    border-radius: 5px;
    background: #9a989b;
    margin-left: 11px;
}
.tb-btn {
    height: 70px;
    border: 2px solid #4a484b;
    border-radius: 6px;
    display: flex;
    align-items: center;
}
.tb-btn span {
    padding-top: 3px;
}
.tb-spark {
    width: 70px;
    margin-left: 25px;
}
.tb-spark svg {
    width: 66px;
    height: 68px;
}
.tb-gen {
    width: 345px;
    margin-left: 10px;
    padding-left: 22px;
    letter-spacing: -0.4px;
}
.tb-gen svg {
    width: 42px;
    height: 46px;
    margin-right: 13px;
}
.tb-sep {
    width: 2px;
    height: 66px;
    margin-left: 12px;
    background: #2b292c;
}
.tb-draw {
    width: 302px;
    margin-left: 12px;
    padding-left: 26px;
    letter-spacing: 0.2px;
}
.tb-draw svg {
    width: 40px;
    height: 42px;
    margin-right: 20px;
}
.tb-img {
    width: 40px;
    height: 38px;
    margin-left: 22px;
}
.tb-more {
    width: 42px;
    height: 12px;
    margin-left: 32px;
}

.vscroll {
    grid-row: 2 / 4;
    grid-column: 2;
    background: #2b292c;
    border-right: 2px solid #232124;
    display: flex;
    flex-direction: column;
    align-items: center;
    padding: 15px 0;
}
.vscroll .chev,
.hscroll .chev {
    color: #8a888b;
}
.vscroll i {
    width: 38px;
    height: 63px;
    border-radius: 18px;
    background: #403e41;
    margin: 931px 0 auto;
}

/* hints and status bar */
.hints {
    grid-column: 1;
    background: #323033;
    border-top: 2px solid #2b292c;
    display: flex;
    align-items: center;
    padding-bottom: 3px;
    color: #9a989b;
    white-space: nowrap;
    letter-spacing: -0.56px;
}
.hints b {
    letter-spacing: 0.6px;
}
.hints em {
    font-style: normal;
    width: 19px;
}
.help {
    width: 36px;
    height: 36px;
    border-radius: 50%;
    background: #b7b5b8;
    color: #323033;
    font-size: 28px;
    font-weight: bold;
    line-height: 36px;
    text-align: center;
    margin: 0 26px 0 13px;
}
.h1 { width: 68px; }
.h2 { width: 231px; }
.h3 { width: 149px; }
.h4 { width: 292px; }
.h5 { width: 121px; }
.hints .h1, .hints .h5 { letter-spacing: 0; }
.status {
    grid-column: 1 / 3;
    background: #323033;
    display: flex;
    padding-left: 9px;
}
.sbox {
    display: flex;
    height: 46px;
    margin-top: 2px;
    border: 2px solid #3f3d40;
    border-radius: 5px 5px 0 0;
    background: #272528;
}
.sbox span {
    flex: 1;
    padding-left: 3px;
    line-height: 49px;
}
.sbox b {
    width: 44px;
    border-left: 2px solid #3f3d40;
    padding-right: 5px;
    display: flex;
    align-items: center;
    justify-content: center;
}
.s-zoom { width: 174px; }
.s-rot { width: 173px; margin-left: 8px; }
.s-page { width: 147px; margin-left: 21px; }
.s-prev, .s-next {
    width: 60px;
    height: 22px;
    margin-top: 14px;
    fill: #605e61;
}
.s-prev { margin-left: 21px; }
.s-next { margin-left: 24px; }
.s-tool {
    width: 500px;
    margin-left: 20px;
    border-left: 2px solid #2b292c;
    border-right: 2px solid #2b292c;
    text-align: center;
    line-height: 54px;
    color: #9a989b;
}
.s-play {
    width: 14px;
    height: 22px;
    margin: 14px 14px 0 17px;
    fill: #d5d3d6;
}
.hscroll {
    flex: 1;
    background: #2b292c;
    display: flex;
    align-items: center;
    padding: 0 11px;
    margin: 2px 42px 0 0;
}
.hscroll i {
    width: 64px;
    height: 38px;
    border-radius: 18px;
    background: #403e41;
    margin: 0 auto 0 1262px;
}

/* dock on the right */
.dock {
    width: 95px;
    margin-left: 5px;
    display: flex;
    flex-direction: column;
}
.dock .collapse {
    justify-content: flex-end;
    padding-right: 15px;
}
.group {
    display: flex;
    flex-direction: column;
    background: #323033;
    border-bottom: 2px solid #232124;
    padding-bottom: 4px;
}
.group .grip {
    margin: 9px 0 8px 23px;
}
.group > svg {
    width: 60px;
    height: 70px;
    margin-left: 20px;
}
.first .grip {
    margin-bottom: 5px;
}
.first {
    padding-bottom: 7px;
}
.dock-rest {
    flex: 1;
    background: #323033;
}
.g-sans {
    font-family: "Liberation Sans", sans-serif;
    font-size: 44px;
    font-weight: bold;
}
.g-serif {
    font-family: "Liberation Serif", serif;
    font-size: 50px;
    font-style: italic;
    font-weight: bold;
}
```
